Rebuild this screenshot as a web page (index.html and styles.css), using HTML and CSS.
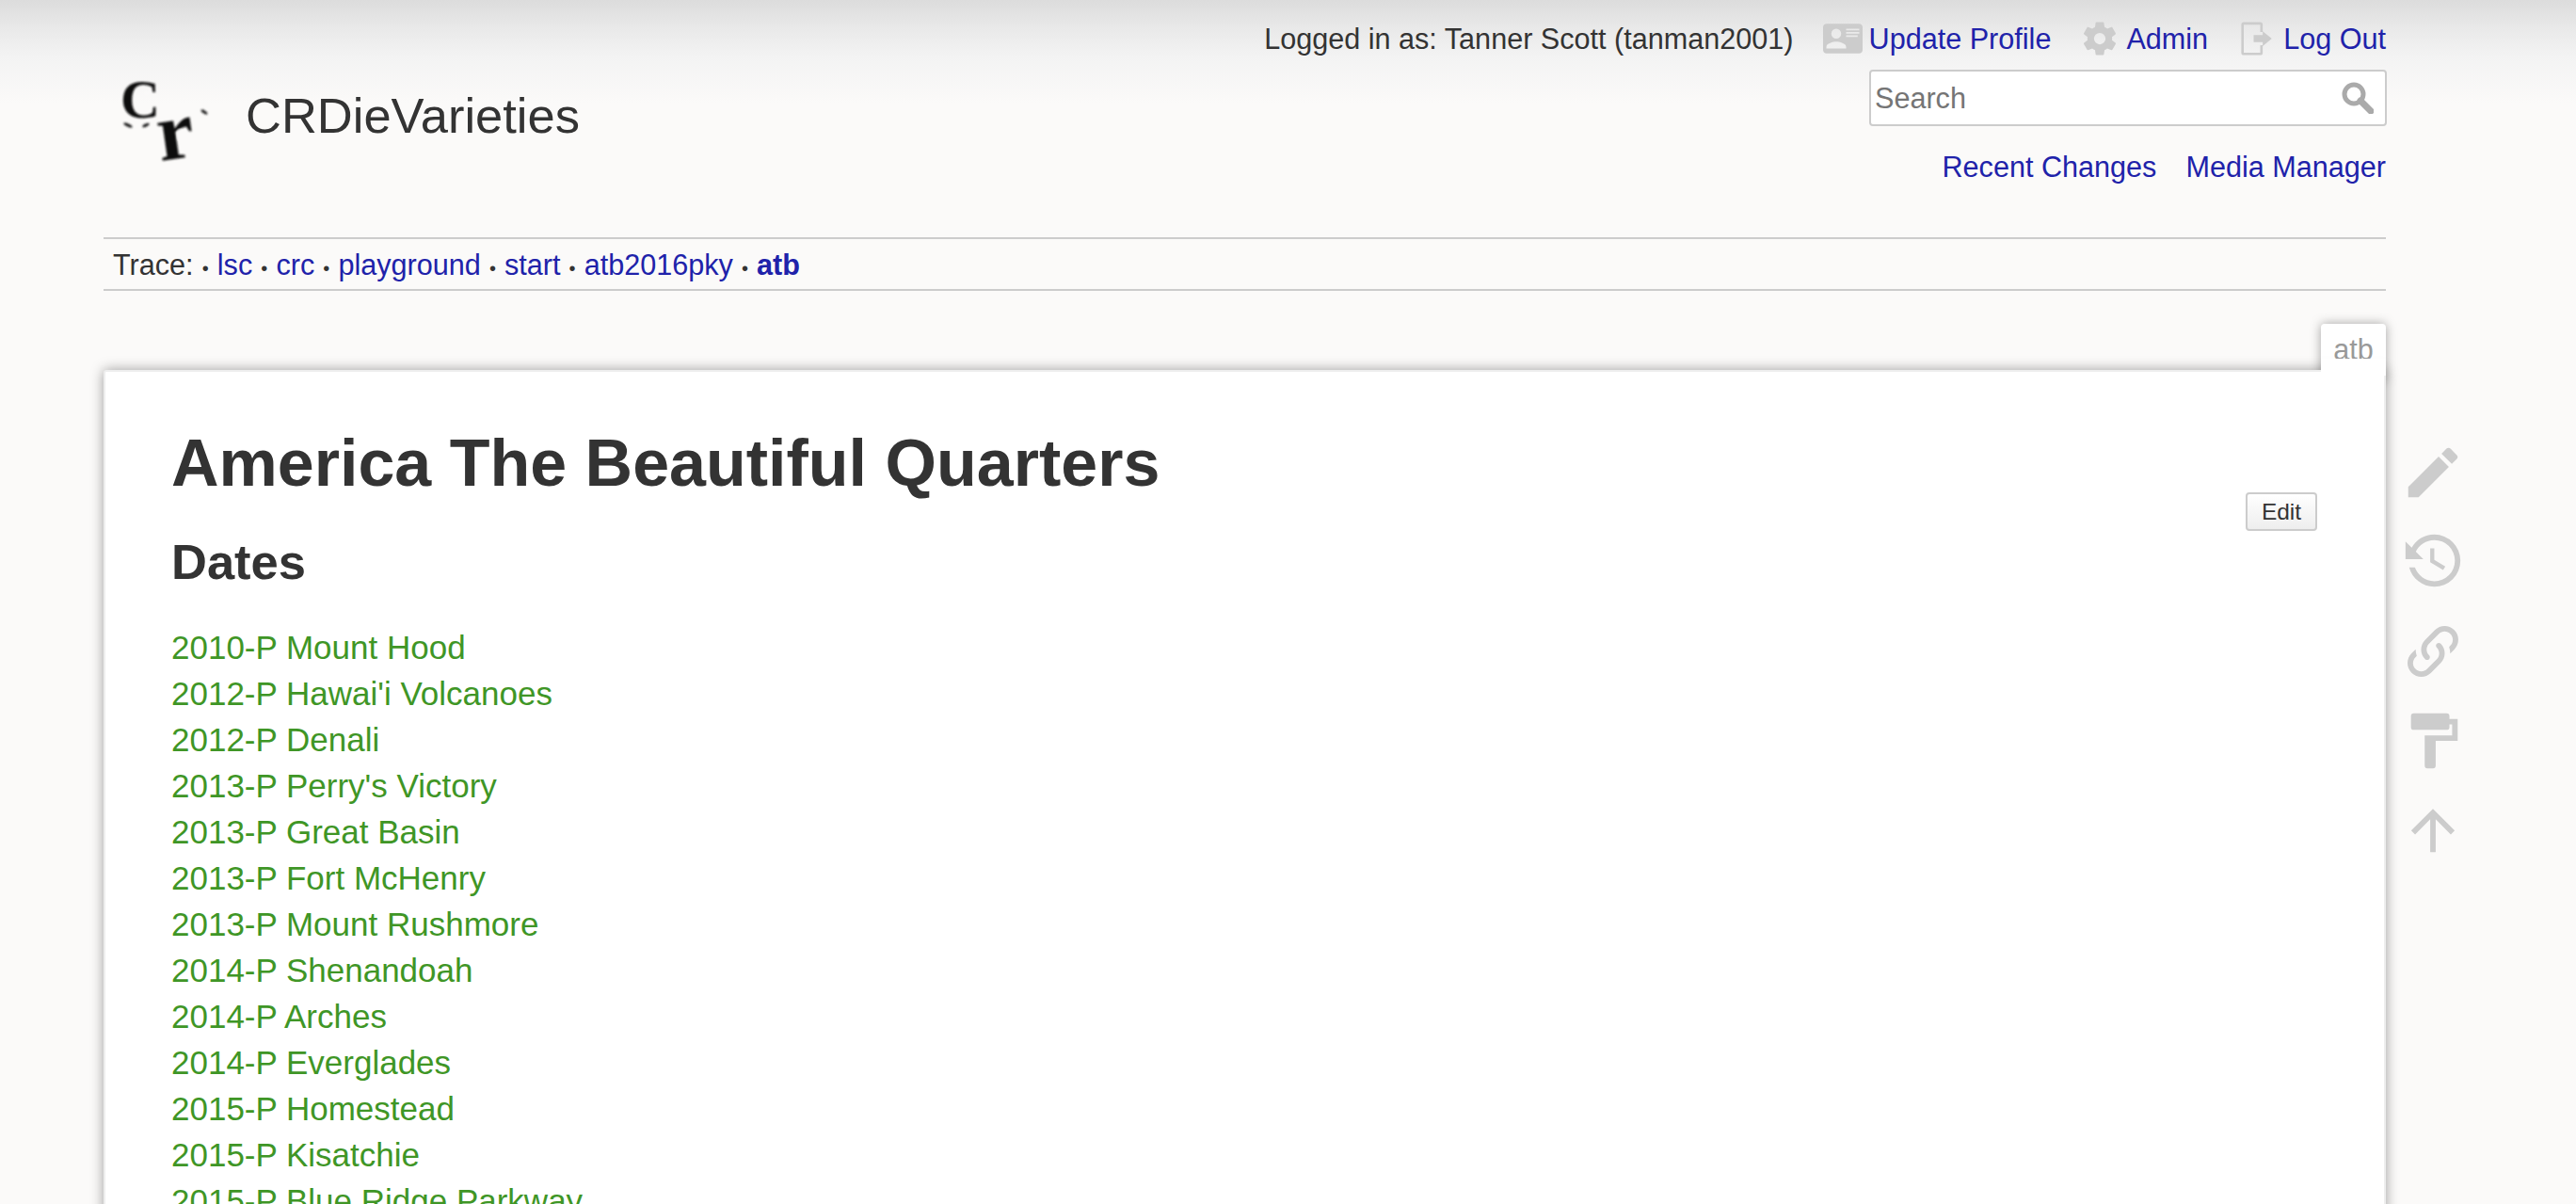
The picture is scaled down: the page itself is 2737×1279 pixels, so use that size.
FILE: index.html
```html
<!DOCTYPE html>
<html lang="en">
<head>
<meta charset="utf-8">
<title>America The Beautiful Quarters - CRDieVarieties</title>
<link rel="stylesheet" href="styles.css">
</head>
<body>
<div class="wrap">
  <header class="header">
    <a class="brand" href="#">
      <svg class="logo" viewBox="0 0 100 100" aria-hidden="true">
        <defs><filter id="soft"><feGaussianBlur stdDeviation="1"/></filter></defs>
        <g filter="url(#soft)">
          <text class="logo-c" x="4" y="52">C</text>
          <text class="logo-r" x="44" y="96" transform="rotate(-8 60 80)">r</text>
          <ellipse class="logo-speck" cx="12" cy="60" rx="5" ry="1.6" transform="rotate(25 12 60)"/>
          <ellipse class="logo-speck" cx="31" cy="60" rx="4" ry="1.6" transform="rotate(-25 31 60)"/>
          <ellipse class="logo-speck" cx="93" cy="46" rx="4" ry="1.6" transform="rotate(35 93 46)"/>
          <ellipse class="logo-gap" cx="32" cy="26" rx="2.5" ry="2"/>
          <ellipse class="logo-gap" cx="67" cy="70" rx="2" ry="5"/>
          <ellipse class="logo-gap" cx="74" cy="84" rx="4" ry="2"/>
        </g>
      </svg>
      <span class="site-title">CRDieVarieties</span>
    </a>
    <div class="tools">
      <ul class="user-tools">
        <li class="user-name">Logged in as: Tanner Scott (tanman2001)</li>
        <li class="tool-item tool-first"><svg class="tool-icon" viewBox="0 0 24 24" aria-hidden="true"><path d="M2,3H22C23.05,3 24,3.95 24,5V19C24,20.05 23.05,21 22,21H2C0.95,21 0,20.05 0,19V5C0,3.95 0.95,3 2,3M14,6V7H22V6H14M14,8V9H21.5L22,9V8H14M14,10V11H21V10H14M8,13.91C6,13.91 2,15 2,17V18H14V17C14,15 10,13.91 8,13.91M8,6A3,3 0 0,0 5,9A3,3 0 0,0 8,12A3,3 0 0,0 11,9A3,3 0 0,0 8,6Z"/></svg><a href="#">Update Profile</a></li>
        <li class="tool-item"><svg class="tool-icon" viewBox="0 0 24 24" aria-hidden="true"><path d="M12,15.5A3.5,3.5 0 0,1 8.5,12A3.5,3.5 0 0,1 12,8.5A3.5,3.5 0 0,1 15.5,12A3.5,3.5 0 0,1 12,15.5M19.43,12.97C19.47,12.65 19.5,12.33 19.5,12C19.5,11.67 19.47,11.34 19.43,11L21.54,9.37C21.73,9.22 21.78,8.95 21.66,8.73L19.66,5.27C19.54,5.05 19.27,4.96 19.05,5.05L16.56,6.05C16.04,5.66 15.5,5.32 14.87,5.07L14.5,2.42C14.46,2.18 14.25,2 14,2H10C9.75,2 9.54,2.18 9.5,2.42L9.13,5.07C8.5,5.32 7.96,5.66 7.44,6.05L4.95,5.05C4.73,4.96 4.46,5.05 4.34,5.27L2.34,8.73C2.21,8.95 2.27,9.22 2.46,9.37L4.57,11C4.53,11.34 4.5,11.67 4.5,12C4.5,12.33 4.53,12.65 4.57,12.97L2.46,14.63C2.27,14.78 2.21,15.05 2.34,15.27L4.34,18.73C4.46,18.95 4.73,19.03 4.95,18.95L7.44,17.94C7.96,18.34 8.5,18.68 9.13,18.93L9.5,21.58C9.54,21.82 9.75,22 10,22H14C14.25,22 14.46,21.82 14.5,21.58L14.87,18.93C15.5,18.67 16.04,18.34 16.56,17.94L19.05,18.95C19.27,19.03 19.54,18.95 19.66,18.73L21.66,15.27C21.78,15.05 21.73,14.78 21.54,14.63L19.43,12.97Z"/></svg><a href="#">Admin</a></li>
        <li class="tool-item"><svg class="tool-icon" viewBox="0 0 24 24" aria-hidden="true"><path d="M4,2H14A1.5,1.5 0 0,1 15.5,3.5V8H14V3.5H4V20.5H14V16H15.5V20.5A1.5,1.5 0 0,1 14,22H4A1.5,1.5 0 0,1 2.5,20.5V3.5A1.5,1.5 0 0,1 4,2ZM10,9.8H15.5V7.5L21,12L15.5,16.5V14.2H10Z"/></svg><a href="#">Log Out</a></li>
      </ul>
      <form class="search">
        <input class="search-input" type="text" placeholder="Search">
        <svg class="search-icon" viewBox="0 0 34 34" aria-hidden="true"><circle cx="13" cy="13" r="10" /><path d="M20 20L31 31"/></svg>
      </form>
      <ul class="site-tools">
        <li><a href="#">Recent Changes</a></li>
        <li><a href="#">Media Manager</a></li>
      </ul>
    </div>
  </header>

  <nav class="trace">
    <span>Trace:</span>
    <span class="sep">•</span>
    <a href="#">lsc</a>
    <span class="sep">•</span>
    <a href="#">crc</a>
    <span class="sep">•</span>
    <a href="#">playground</a>
    <span class="sep">•</span>
    <a href="#">start</a>
    <span class="sep">•</span>
    <a href="#">atb2016pky</a>
    <span class="sep">•</span>
    <a class="current" href="#">atb</a>
  </nav>

  <div class="main">
    <div class="sheet">
      <div class="tab">atb</div>
      <main class="page">
        <button class="edit" type="button">Edit</button>
        <h1>America The Beautiful Quarters</h1>
        <h2>Dates</h2>
        <ul class="dates">
          <li><a href="#">2010-P Mount Hood</a></li>
          <li><a href="#">2012-P Hawai'i Volcanoes</a></li>
          <li><a href="#">2012-P Denali</a></li>
          <li><a href="#">2013-P Perry's Victory</a></li>
          <li><a href="#">2013-P Great Basin</a></li>
          <li><a href="#">2013-P Fort McHenry</a></li>
          <li><a href="#">2013-P Mount Rushmore</a></li>
          <li><a href="#">2014-P Shenandoah</a></li>
          <li><a href="#">2014-P Arches</a></li>
          <li><a href="#">2014-P Everglades</a></li>
          <li><a href="#">2015-P Homestead</a></li>
          <li><a href="#">2015-P Kisatchie</a></li>
          <li><a href="#">2015-P Blue Ridge Parkway</a></li>
        </ul>
      </main>
    </div>
    <aside class="page-tools">
      <svg class="page-icon" viewBox="0 0 24 24" aria-hidden="true"><path d="M20.71,7.04C21.1,6.65 21.1,6 20.71,5.63L18.37,3.29C18,2.9 17.35,2.9 16.96,3.29L15.12,5.12L18.87,8.87M3,17.25V21H6.75L17.81,9.93L14.06,6.18L3,17.25Z"/></svg>
      <svg class="page-icon" viewBox="0 0 24 24" aria-hidden="true"><path d="M11,7V12.11L15.71,14.9L16.5,13.62L12.5,11.25V7M12.5,2C8.97,2 5.91,3.92 4.27,6.77L2,4.5V11H8.5L5.75,8.25C6.96,5.73 9.5,4 12.5,4A7.5,7.5 0 0,1 20,11.5A7.5,7.5 0 0,1 12.5,19C9.23,19 6.47,16.91 5.44,14H3.34C4.44,18.03 8.11,21 12.5,21A9.5,9.5 0 0,0 22,11.5A9.5,9.5 0 0,0 12.5,2Z"/></svg>
      <svg class="page-icon" viewBox="0 0 24 24" aria-hidden="true"><path d="M10.59,13.41C11,13.8 11,14.44 10.59,14.83C10.2,15.22 9.56,15.22 9.17,14.83C7.22,12.88 7.22,9.71 9.17,7.76V7.76L12.71,4.22C14.66,2.27 17.83,2.27 19.78,4.22C21.73,6.17 21.73,9.34 19.78,11.29L18.29,12.78C18.3,11.96 18.17,11.14 17.89,10.36L18.36,9.88C19.54,8.71 19.54,6.81 18.36,5.64C17.19,4.46 15.29,4.46 14.12,5.64L10.59,9.17C9.41,10.34 9.41,12.24 10.59,13.41M13.41,9.17C13.8,8.78 14.44,8.78 14.83,9.17C16.78,11.12 16.78,14.29 14.83,16.24V16.24L11.29,19.78C9.34,21.73 6.17,21.73 4.22,19.78C2.27,17.83 2.27,14.66 4.22,12.71L5.71,11.22C5.7,12.04 5.83,12.86 6.11,13.65L5.64,14.12C4.46,15.29 4.46,17.19 5.64,18.36C6.81,19.54 8.71,19.54 9.88,18.36L13.41,14.83C14.59,13.66 14.59,11.76 13.41,10.59C13,10.2 13,9.56 13.41,9.17Z"/></svg>
      <svg class="page-icon" viewBox="0 0 24 24" aria-hidden="true"><path d="M18,4V3A1,1 0 0,0 17,2H5A1,1 0 0,0 4,3V7A1,1 0 0,0 5,8H17A1,1 0 0,0 18,7V6H19V10H9V21A1,1 0 0,0 10,22H12A1,1 0 0,0 13,21V12H21V4H18Z"/></svg>
      <svg class="page-icon" viewBox="0 0 24 24" aria-hidden="true"><path d="M13,20H11V8L5.5,13.5L4.08,12.08L12,4.16L19.92,12.08L18.5,13.5L13,8V20Z"/></svg>
    </aside>
  </div>
</div>
</body>
</html>
```

FILE: styles.css
```css
* { box-sizing: border-box; }
html, body { margin: 0; height: 100%; overflow: hidden; }
body {
  background: #fbfaf9 linear-gradient(#dcdcdc 0, #e9e9e9 30px, #f3f3f3 60px, #fbfaf9 110px) no-repeat;
  background-size: 100% 110px;
  color: #333;
  font: 35px/49px "Liberation Sans", Arial, sans-serif;
}
a { color: #2022aa; text-decoration: none; }
ul { list-style: none; margin: 0; padding: 0; }

.wrap { padding-left: 110px; width: 2737px; }

.header { width: 2425px; height: 252px; display: flex; justify-content: space-between; align-items: flex-start; font-size: 30.6px; }
.brand { display: flex; align-items: center; margin-top: 73px; color: #333; }
.logo { width: 100px; height: 100px; margin-left: 14px; flex: none; overflow: visible; }
.logo-c { font: bold 58px "Liberation Serif", serif; fill: #111; }
.logo-r { font: bold 88px "Liberation Serif", serif; fill: #111; }
.logo-speck { fill: #222; }
.logo-gap { fill: #fbfaf9; }
.site-title { font-size: 52.5px; line-height: 60px; margin-left: 37px; }

.tools { display: flex; flex-direction: column; align-items: flex-end; }
.user-tools { display: flex; align-items: center; height: 42px; margin-top: 20px; }
.tool-item { display: flex; align-items: center; margin-left: 31px; }
.tool-first { margin-left: 31px; }
.tool-icon { width: 42px; height: 42px; fill: #ccc; margin-right: 7px; flex: none; }
.search { width: 550px; height: 60px; margin: 12px -1px 0 0; position: relative; }
.search-input {
  width: 100%; height: 100%; padding: 0 60px 0 4px;
  border: 2px solid #ccc; border-radius: 4px; background: #fff;
  font: 30.6px "Liberation Sans", Arial, sans-serif; color: #333;
}
.search-input::placeholder { color: #757575; opacity: 1; }
.search-icon { position: absolute; right: 14px; top: 13px; width: 34px; height: 34px; fill: none; stroke: #aaa; }
.search-icon circle { stroke-width: 5; }
.search-icon path { stroke-width: 7; stroke-linecap: round; }
.site-tools { display: flex; gap: 31px; margin-top: 19px; }

.trace {
  width: 2425px; height: 57px; padding: 2px 10px 0;
  border-top: 2px solid #ccc; border-bottom: 2px solid #ccc;
  font-size: 30.6px; line-height: 51px; white-space: nowrap;
}
.sep { font-size: 20px; vertical-align: 0; margin: 0 .6px; }
.current { font-weight: bold; }

.main { display: flex; align-items: flex-start; margin-top: 84px; }
.sheet { width: 2425px; position: relative; flex: none; }
.tab {
  position: absolute; right: 0; top: -49px; width: 69px; height: 60px;
  background: #fff; color: #999; text-align: center; font-size: 30.6px; line-height: 54px;
  border-radius: 4px 4px 0 0; box-shadow: 0 0 12px rgba(0,0,0,.35);
}
.page {
  position: relative; background: #fff; height: 1000px; padding: 57px 70px 0;
  border: 2px solid #eee; border-radius: 3px; box-shadow: 0 0 14px rgba(0,0,0,.38);
}
.page::before {
  content: ""; position: absolute; right: -2px; top: -14px; width: 69px; height: 18px; background: #fff;
}
.edit {
  float: right; margin: 71px 1px 0 0; width: 76px; height: 41px; padding: 0;
  border: 2px solid #ccc; border-radius: 4px; color: #333;
  background: linear-gradient(#ffffff, #eeeeee);
  font: 24.5px "Liberation Sans", Arial, sans-serif;
}
h1 { font-size: 70px; line-height: 80px; margin: 0; }
h2 { font-size: 52.5px; line-height: 60px; margin: 0; }
.page h2 { margin-top: 35px; }
.dates { margin-top: 36px; }
.dates a { color: #3f9626; }

.page-tools { margin: 74px 0 0 15px; display: flex; flex-direction: column; gap: 25px; }
.page-icon { width: 70px; height: 70px; fill: #ccc; display: block; }
```
